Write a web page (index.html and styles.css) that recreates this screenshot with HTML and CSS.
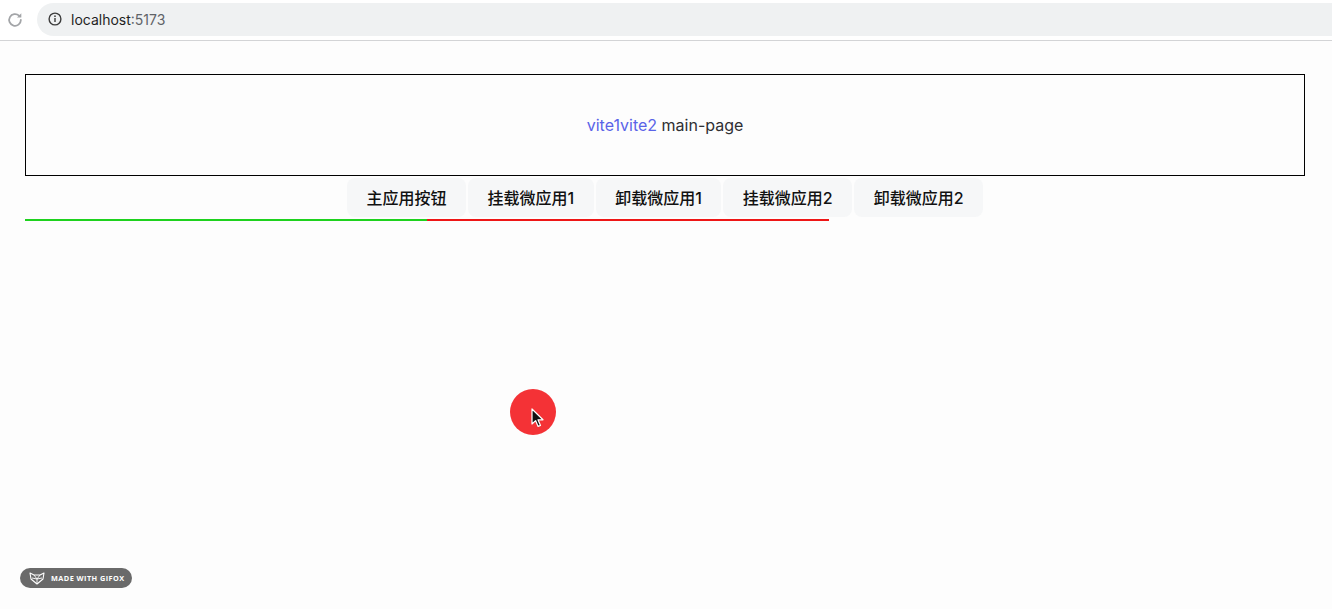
FILE: index.html
```html
<!DOCTYPE html>
<html lang="zh">
<head>
<meta charset="utf-8">
<title>localhost:5173</title>
<link rel="stylesheet" href="styles.css">
</head>
<body>
<header class="chrome">
  <svg class="reload" width="18" height="18" viewBox="0 0 16 16">
    <path d="M13.2 8a5.2 5.2 0 1 1-1.6-3.8" fill="none" stroke="#a3a5a8" stroke-width="1.6" stroke-linecap="round"/>
    <path d="M13.6 2v3.8H9.8z" fill="#a3a5a8"/>
  </svg>
  <div class="omnibox">
    <svg class="info" width="14" height="14" viewBox="0 0 14 14">
      <circle cx="7" cy="7" r="5.9" fill="none" stroke="#3c3c3c" stroke-width="1.4"/>
      <rect x="6.3" y="6" width="1.4" height="4" fill="#3c3c3c"/>
      <circle cx="7" cy="4.2" r="0.85" fill="#3c3c3c"/>
    </svg>
    <span class="host">localhost</span><span class="port">:5173</span>
  </div>
</header>

<main class="page">
  <section class="box">
    <p class="title"><span class="blue">vite1vite2</span> main-page</p>
  </section>
  <div class="btn-row">
    <button class="btn">主应用按钮</button>
    <button class="btn">挂载微应用1</button>
    <button class="btn">卸载微应用1</button>
    <button class="btn">挂载微应用2</button>
    <button class="btn">卸载微应用2</button>
  </div>
  <div class="lines">
    <div class="seg green"></div>
    <div class="seg red"></div>
  </div>
</main>

<div class="click-dot"></div>
<svg class="cursor" width="14" height="20" viewBox="0 0 14 20">
  <path d="M1 1v15l3.6-3.4 2.5 5.8 2.4-1-2.5-5.6H12z" fill="#111" stroke="#fff" stroke-width="1.2" stroke-linejoin="round"/>
</svg>

<div class="gifox">
  <svg width="16" height="13" viewBox="0 0 16 13">
    <path d="M1 1l4 2h6l4-2-1 6-6 5-6-5z" fill="none" stroke="#fff" stroke-width="1.1" stroke-linejoin="round"/>
    <path d="M5 3l3 4 3-4M3 6l5 1 5-1M8 7v5" fill="none" stroke="#fff" stroke-width="0.9"/>
  </svg>
  <span>MADE WITH GIFOX</span>
</div>
</body>
</html>
```
FILE: styles.css
```css
html, body {
  margin: 0;
  padding: 0;
}

body {
  background: #fdfdfd;
  font-family: Inter, "Noto Sans CJK SC", sans-serif;
  color: #213547;
  width: 1332px;
  height: 609px;
  overflow: hidden;
  position: relative;
}

.chrome {
  height: 41px;
  border-bottom: 1px solid #d3d4d6;
  background: #ffffff;
  display: flex;
  align-items: center;
  box-sizing: border-box;
}

.reload {
  margin-left: 6px;
  flex: none;
}

.omnibox {
  margin-left: 13px;
  flex: 1;
  height: 33px;
  border-radius: 17px 0 0 17px;
  background: #eff1f2;
  display: flex;
  align-items: center;
  padding-left: 11px;
  font-size: 14px;
  margin-top: -2px;
}

.info {
  margin-right: 9px;
}

.host {
  color: #1f1f1f;
}

.port {
  color: #5f6368;
}

.page {
  padding: 33px 27px 0 25px;
}

.box {
  height: 100px;
  border: 1px solid #000;
  display: flex;
  align-items: center;
  justify-content: center;
}

.title {
  margin: 0;
  font-size: 16px;
  line-height: 24px;
  color: #2f2f33;
}

.blue {
  color: #5a63e8;
}

.btn-row {
  display: flex;
  justify-content: center;
  gap: 2px;
  margin-top: 2px;
}

.btn {
  height: 39px;
  padding: 0 19.5px 1px;
  border: none;
  border-radius: 8px;
  background: #f6f7f8;
  font-family: Inter, "Noto Sans CJK SC", sans-serif;
  font-size: 16px;
  font-weight: 500;
  color: #111;
  cursor: pointer;
}

.lines {
  display: flex;
  margin-top: 2px;
}

.seg {
  width: 402px;
  height: 2px;
}

.green {
  background: #1ed21e;
}

.red {
  background: #ee1616;
}

.click-dot {
  position: absolute;
  left: 510px;
  top: 389px;
  width: 46px;
  height: 46px;
  border-radius: 50%;
  background: #f43236;
}

.cursor {
  position: absolute;
  left: 531px;
  top: 408px;
}

.gifox {
  position: absolute;
  left: 20px;
  top: 568px;
  width: 112px;
  height: 20px;
  border-radius: 10px;
  background: #6a6a6a;
  display: flex;
  align-items: center;
  gap: 6px;
  padding-left: 9px;
  box-sizing: border-box;
}

.gifox span {
  font-family: "Open Sans", sans-serif;
  font-weight: 700;
  font-size: 7.3px;
  letter-spacing: 0.45px;
  color: #fff;
}
```
